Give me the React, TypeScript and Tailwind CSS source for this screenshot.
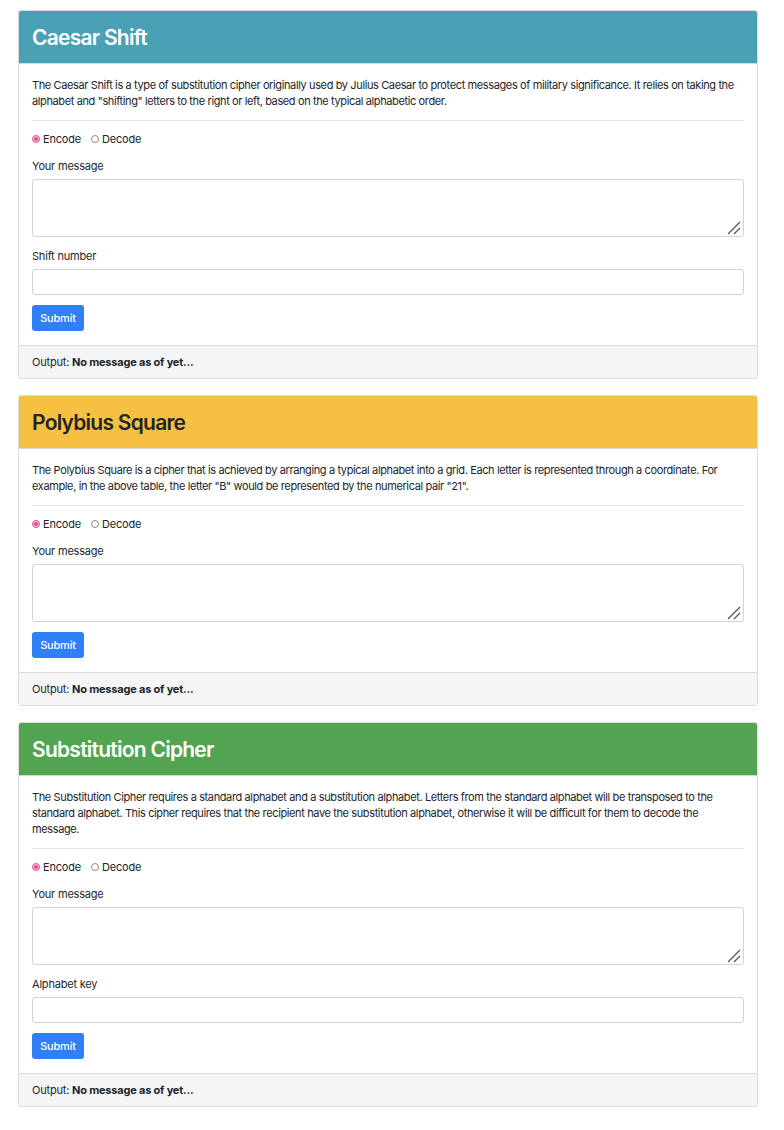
import React from 'react';

interface CipherCardProps {
  title: string;
  headerClass: string;
  titleClass: string;
  description: string;
  extraLabel?: string;
}

function Radio({ label, checked }: { label: string; checked?: boolean }) {
  return (
    <label className="flex items-center gap-[3px]">
      {checked ? (
        <span className="w-[8px] h-[8px] rounded-full border border-[#e2488a] bg-[#f9d3e2] flex items-center justify-center">
          <span className="w-[4px] h-[4px] rounded-full bg-[#e2488a]" />
        </span>
      ) : (
        <span className="w-[8px] h-[8px] rounded-full border border-[#8a8a8a] bg-white" />
      )}
      <span>{label}</span>
    </label>
  );
}

function CipherCard({ title, headerClass, titleClass, description, extraLabel }: CipherCardProps) {
  return (
    <div className="w-[740px] border border-[#dcdcdc] rounded-[3px] overflow-hidden mb-4 bg-white">
      {/* Header */}
      <div className={`h-[53px] flex items-center px-[13px] border-b border-[#d6d6d6] ${headerClass}`}>
        <h2 className={`text-[21px] leading-none font-semibold tracking-[-0.75px] ${titleClass}`}>{title}</h2>
      </div>

      {/* Body */}
      <div className="px-[13px] pt-[13px] pb-[14px]">
        <p className="leading-[16px] tracking-[-0.38px]">{description}</p>
        <hr className="mt-[11px] mb-[10px] border-0 border-t border-[#e3e3e3]" />

        <div className="flex items-center gap-[10px] h-[16px]">
          <Radio label="Encode" checked />
          <Radio label="Decode" />
        </div>

        <div className="mt-[11px] leading-[16px]">Your message</div>
        <div className="relative mt-[5px]">
          <textarea className="block w-full h-[58px] border border-[#cfd4da] rounded-[3px] resize-none outline-none" />
          <svg className="absolute right-[3px] bottom-[2px]" width="14" height="14" viewBox="0 0 14 14">
            <line x1="1" y1="13" x2="13" y2="1" stroke="#555" strokeWidth="1.3" />
            <line x1="7" y1="13" x2="13" y2="7" stroke="#555" strokeWidth="1.3" />
          </svg>
        </div>

        {extraLabel && (
          <>
            <div className="mt-[11px] leading-[16px]">{extraLabel}</div>
            <input className="block mt-[5px] w-full h-[26px] border border-[#cfd4da] rounded-[3px] outline-none" />
          </>
        )}

        <button className="mt-[10px] h-[26px] w-[52px] rounded-[3px] bg-[#2f80f6] text-white text-[11px] font-medium">
          Submit
        </button>
      </div>

      {/* Footer */}
      <div className="h-[33px] flex items-center px-[13px] bg-[#f5f5f5] border-t border-[#dcdcdc]">
        <span>
          Output: <b className="font-bold">No message as of yet...</b>
        </span>
      </div>
    </div>
  );
}

export default function App() {
  return (
    <div className="min-h-[1130px] bg-white pt-[10px] pl-[18px] text-[11px] tracking-[-0.2px] text-[#212529] font-['Inter','Noto_Sans',sans-serif]">
      <CipherCard
        title="Caesar Shift"
        headerClass="bg-[#4aa0b5]"
        titleClass="text-white"
        description={'The Caesar Shift is a type of substitution cipher originally used by Julius Caesar to protect messages of military significance. It relies on taking the alphabet and "shifting" letters to the right or left, based on the typical alphabetic order.'}
        extraLabel="Shift number"
      />
      <CipherCard
        title="Polybius Square"
        headerClass="bg-[#f6c143]"
        titleClass="text-[#212529]"
        description={'The Polybius Square is a cipher that is achieved by arranging a typical alphabet into a grid. Each letter is represented through a coordinate. For example, in the above table, the letter "B" would be represented by the numerical pair "21".'}
      />
      <CipherCard
        title="Substitution Cipher"
        headerClass="bg-[#52a450]"
        titleClass="text-white"
        description="The Substitution Cipher requires a standard alphabet and a substitution alphabet. Letters from the standard alphabet will be transposed to the standard alphabet. This cipher requires that the recipient have the substitution alphabet, otherwise it will be difficult for them to decode the message."
        extraLabel="Alphabet key"
      />
    </div>
  );
}
